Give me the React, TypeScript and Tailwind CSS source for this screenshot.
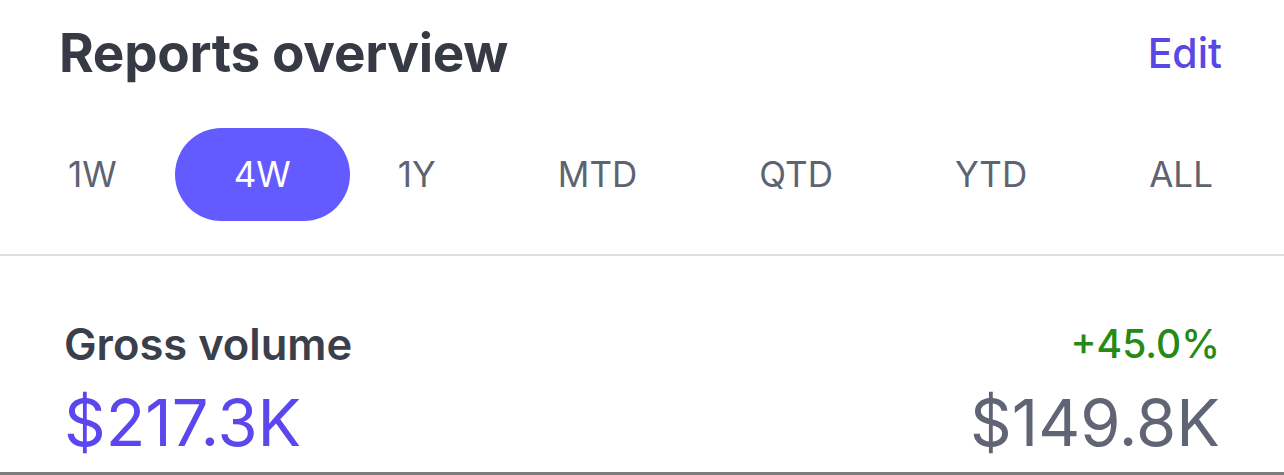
import React, { useState } from 'react';

const RANGES = ['1W', '4W', '1Y', 'MTD', 'QTD', 'YTD', 'ALL'];

export default function App() {
  const [range, setRange] = useState('4W');

  return (
    <div className="h-[475px] w-full overflow-hidden bg-white border-b-[3px] border-[#7d7d7d] font-['Inter','Liberation_Sans',sans-serif]">
      <div className="flex h-[108px] items-center justify-between pl-[59px] pr-[62px]">
        <h1 className="text-[53px] font-bold tracking-[-0.3px] text-[#353a45]">Reports overview</h1>
        <button className="text-[41px] font-medium text-[#5a48e4]">Edit</button>
      </div>

      <div className="mt-[20px] flex items-center justify-between pl-[7px] pr-[11px]">
        {RANGES.map((r) => (
          <button
            key={r}
            onClick={() => setRange(r)}
            className={
              r === range
                ? '-ml-[3px] -mr-[13px] h-[93px] rounded-full bg-[#635bff] px-[59px] text-[35px] text-white'
                : 'h-[93px] rounded-full px-[61px] text-[35px] text-[#5d6371]'
            }
          >
            {r}
          </button>
        ))}
      </div>

      <div className="mt-[33px] h-[2px] bg-[#dedde4]" />

      <div className="flex items-start justify-between pl-[64px] pr-[64px] pt-[66px]">
        <div className="flex flex-col">
          <span className="text-[43.5px] font-semibold leading-[44px] text-[#3a3f4b]">Gross volume</span>
          <span className="mt-[25px] text-[65px] leading-[64px] text-[#5a47ee]">$217.3K</span>
        </div>
        <div className="flex flex-col items-end">
          <span className="text-[39px] font-medium leading-[44px] text-[#268a17]">+45.0%</span>
          <span className="mt-[25px] text-[65px] leading-[64px] text-[#5f6574]">$149.8K</span>
        </div>
      </div>
    </div>
  );
}
